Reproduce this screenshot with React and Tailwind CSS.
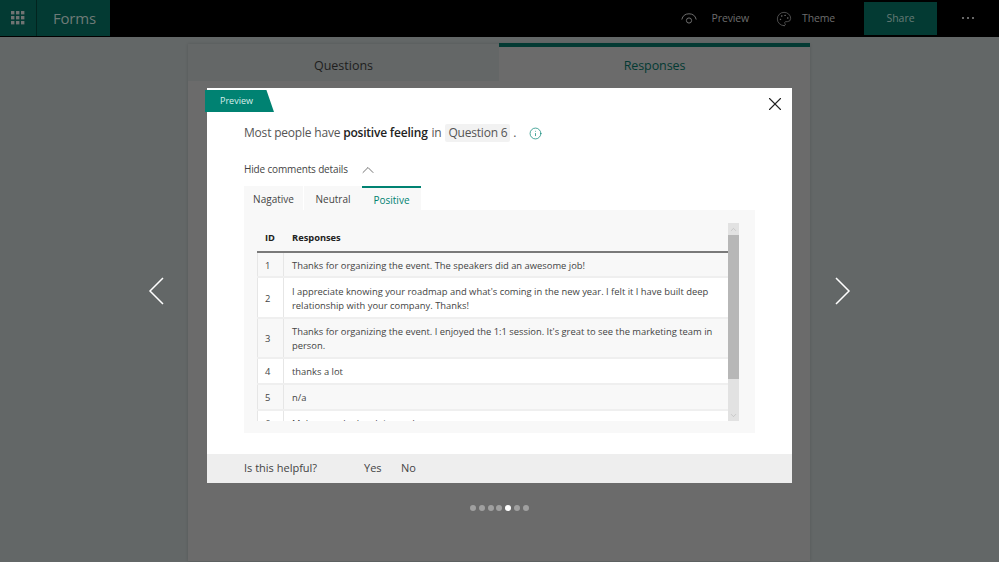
import React from "react";
import { ChevronUp, ChevronDown, X, Info, Palette } from "lucide-react";

const rows = [
  { id: 1, text: "Thanks for organizing the event. The speakers did an awesome job!", cls: "h-[25px] bg-[#f8f8f8]" },
  { id: 2, text: "I appreciate knowing your roadmap and what's coming in the new year. I felt it I have built deep relationship with your company. Thanks!", cls: "h-[41px] bg-white" },
  { id: 3, text: "Thanks for organizing the event. I enjoyed the 1:1 session. It's great to see the marketing team in person.", cls: "h-[40px] bg-[#f8f8f8]" },
  { id: 4, text: "thanks a lot", cls: "h-[26px] bg-white" },
  { id: 5, text: "n/a", cls: "h-[26px] bg-[#f8f8f8]" },
  { id: 6, text: "Make sure the lunch is good", cls: "h-[26px] bg-white" },
];

const dots = [0, 1, 2, 3, 4, 5, 6];

function Grid() {
  return (
    <svg width="14" height="14" viewBox="0 0 14 14" fill="#6f7372">
      {[0, 5, 10].map((y) =>
        [0, 5, 10].map((x) => <rect key={x + "-" + y} x={x} y={y} width="3.4" height="3.4" />)
      )}
    </svg>
  );
}

function Eye() {
  return (
    <svg width="16" height="12" viewBox="0 0 16 12" fill="none" stroke="#6f6f6f" strokeWidth="1">
      <path d="M0.8 6.5 A7.4 7.4 0 0 1 15.2 6.5" />
      <circle cx="8" cy="7.5" r="2.6" />
    </svg>
  );
}

function Arrow({ dir }) {
  return (
    <svg width="16" height="28" viewBox="0 0 16 28" fill="none" stroke="#fff" strokeWidth="1.5">
      <path d={dir === "left" ? "M15 1 L2 14 L15 27" : "M1 1 L14 14 L1 27"} />
    </svg>
  );
}

export default function App() {
  return (
    <div className="relative h-[562px] w-[999px] overflow-hidden bg-[#636767] font-['Open_Sans',sans-serif]">
      <header className="flex h-[37px] items-stretch bg-black">
        <div className="flex h-[36px] w-[36px] items-center justify-center bg-[#033a33]">
          <Grid />
        </div>
        <div className="flex h-[36px] w-[74px] items-center border-l border-[#02241f] bg-[#033a33] pl-[16px] pt-[1px] text-[15px] tracking-[-0.2px] text-[#6f7a78]">
          Forms
        </div>
        <div className="ml-auto flex items-center text-[10.5px] tracking-[-0.15px] text-[#6c6c6c]">
          <Eye />
          <span className="ml-[15px] mr-[27px]">Preview</span>
          <Palette size={16} strokeWidth={1} className="text-[#6f6f6f]" />
          <span className="ml-[10px] mr-[29px]">Theme</span>
        </div>
        <div className="mt-[2px] flex h-[33px] w-[73px] items-center justify-center bg-[#033a33] text-[10.5px] text-[#667a76]">
          Share
        </div>
        <div className="flex w-[62px] items-center justify-center gap-[3px] pb-[2px]">
          <span className="h-[2px] w-[2px] rounded-full bg-[#8a8a8a]" />
          <span className="h-[2px] w-[2px] rounded-full bg-[#8a8a8a]" />
          <span className="h-[2px] w-[2px] rounded-full bg-[#8a8a8a]" />
        </div>
      </header>

      <main className="ml-[188px] mt-[7px] h-[517px] w-[622px] bg-[#6b6b6b] shadow-[0_0_3px_rgba(0,0,0,0.15)]">
        <div className="flex h-[37px]">
          <div className="flex w-[311px] items-center justify-center bg-[#646767] pt-[7px] text-[12.5px] text-[#1e1e1e]">
            Questions
          </div>
          <div className="-mt-[1px] flex w-[311px] items-center justify-center border-t-[4px] border-[#033a33] pt-[4px] text-[12.5px] tracking-[-0.1px] text-[#033a33]">
            Responses
          </div>
        </div>
      </main>

      <button className="absolute left-[148px] top-[277px]">
        <Arrow dir="left" />
      </button>
      <button className="absolute left-[835px] top-[277px]">
        <Arrow dir="right" />
      </button>

      <section className="absolute left-[207px] top-[88px] flex h-[395px] w-[585px] flex-col bg-white text-[#444]">
        <div className="absolute -left-[2px] top-[2px] flex h-[22px] w-[69px] items-center bg-[#008272] pl-[15px] text-[9px] text-[#d8eeea] [clip-path:polygon(0_0,89%_0,100%_100%,0_100%)]">
          Preview
        </div>
        <X size={22} strokeWidth={1.2} className="absolute right-[6px] top-[5px] text-[#222]" />

        <div className="flex-1 pl-[37px] pr-[37px] pt-[36px]">
          <div className="flex h-[18px] items-center text-[12px] tracking-[-0.2px] text-[#555]">
            <span>Most people have&nbsp;</span>
            <b className="font-semibold text-[#222]">positive feeling</b>
            <span className="ml-px">&nbsp;in&nbsp;</span>
            <span className="ml-px rounded-[2px] bg-[#f2f2f2] px-[3px]">Question 6</span>
            <span>&nbsp;.</span>
            <Info size={13} strokeWidth={1.3} className="ml-[13px] text-[#008272]" />
          </div>

          <div className="mt-[19px] flex h-[16px] items-center text-[10px] tracking-[-0.15px] text-[#444]">
            <span>Hide comments details</span>
            <ChevronUp size={20} strokeWidth={0.9} className="ml-[10px] mt-[2px] text-[#444]" />
          </div>

          <div className="mt-[9px] flex h-[24px] items-stretch text-[10px] text-[#444]">
            <div className="flex w-[59px] items-center justify-center bg-[#f8f8f8] pt-[3px]">Nagative</div>
            <div className="ml-px flex w-[58px] items-center justify-center bg-[#f8f8f8] pt-[3px]">Neutral</div>
            <div className="flex w-[59px] items-center justify-center border-t-2 border-[#008272] bg-[#f8f8f8] pt-[2px] text-[#008272]">
              Positive
            </div>
          </div>

          <div className="flex h-[223px] w-[511px] items-start bg-[#f8f8f8] px-[13px] pt-[13px]">
            <div className="h-[198px] w-[471px] overflow-hidden">
              <div className="flex h-[30px] items-center border-b-2 border-[#7a7a7a] pt-[2px] text-[9.3px] font-bold text-[#222]">
                <span className="w-[26px] pl-[8px]">ID</span>
                <span className="pl-[9px]">Responses</span>
              </div>
              {rows.map((r) => (
                <div
                  key={r.id}
                  className={"flex items-stretch border-b-2 border-[#efefef] text-[9.4px] leading-[14px] text-[#444] " + r.cls}
                >
                  <div className="flex w-[27px] shrink-0 items-center border-x border-[#e6e6e6] pl-[7px] pt-[2px]">{r.id}</div>
                  <div className="flex flex-1 items-center pl-[8px] pr-[8px] pt-[2px]">{r.text}</div>
                </div>
              ))}
            </div>
            <div className="flex h-[198px] w-[11px] flex-col bg-[#e2e2e2]">
              <div className="flex h-[12px] items-center justify-center text-[#aaa]">
                <ChevronUp size={9} strokeWidth={1.2} />
              </div>
              <div className="h-[144px] bg-[#b7b7b7]" />
              <div className="mt-auto flex h-[12px] items-center justify-center text-[#aaa]">
                <ChevronDown size={9} strokeWidth={1.2} />
              </div>
            </div>
          </div>
        </div>

        <div className="flex h-[29px] items-center bg-[#eeeeee] pl-[37px] text-[11px] text-[#444]">
          <span className="w-[120px]">Is this helpful?</span>
          <span className="w-[37px]">Yes</span>
          <span>No</span>
        </div>
      </section>

      <div className="absolute left-[470px] top-[505px] flex gap-[2.8px]">
        {dots.map((d) => (
          <span
            key={d}
            className={d === 4 ? "h-[6px] w-[6px] rounded-full bg-white" : "h-[6px] w-[6px] rounded-full bg-[#a0a0a0]"}
          />
        ))}
      </div>
    </div>
  );
}
